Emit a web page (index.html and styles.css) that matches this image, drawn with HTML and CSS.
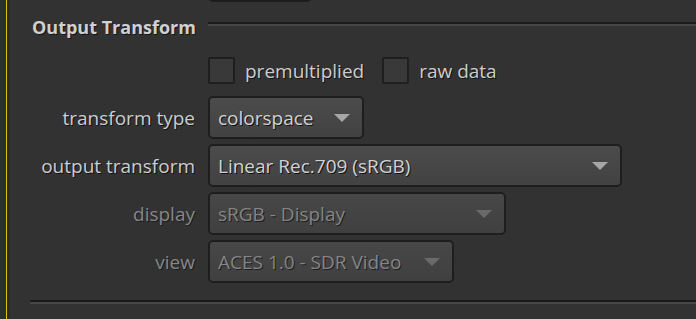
FILE: index.html
```html
<!DOCTYPE html>
<html>
<head>
<meta charset="utf-8">
<link rel="stylesheet" href="styles.css">
</head>
<body>
<div class="panel">
  <div class="rail"></div>
  <div class="rail-line"></div>
  <div class="rail-shadow"></div>
  <div class="content">
    <div class="stub"></div>
    <div class="section-head">
      <span class="section-title">Output Transform</span>
      <span class="section-rule"></span>
    </div>
    <div class="form">
      <span></span>
      <div class="checks">
        <label class="check"><span class="box"></span><span class="check-text">premultiplied</span></label>
        <label class="check"><span class="box"></span><span class="check-text">raw data</span></label>
      </div>
      <span class="label">transform type</span>
      <div class="select w-type"><span class="value">colorspace</span><span class="arrow"></span></div>
      <span class="label">output transform</span>
      <div class="select w-out"><span class="value">Linear Rec.709 (sRGB)</span><span class="arrow"></span></div>
      <span class="label disabled">display</span>
      <div class="select disabled w-display"><span class="value">sRGB - Display</span><span class="arrow"></span></div>
      <span class="label disabled">view</span>
      <div class="select disabled w-view"><span class="value">ACES 1.0 - SDR Video</span><span class="arrow"></span></div>
    </div>
    <div class="bottom-rule"></div>
  </div>
</div>
</body>
</html>
```
FILE: styles.css
```css
html, body {
  margin: 0;
  padding: 0;
  background: #323232;
  overflow: hidden;
}
body {
  font-family: "Open Sans", "Noto Sans", "DejaVu Sans", sans-serif;
  font-size: 19px;
  color: #cdcdcd;
}
.panel {
  display: flex;
  width: 696px;
  height: 319px;
}
.rail {
  width: 6px;
  background: #2f2f2f;
}
.rail-line {
  width: 1px;
  background: #d6c800;
}
.rail-shadow {
  width: 3px;
  background: #2a2a2a;
}
.content {
  flex: 1;
  min-width: 0;
}
.stub {
  margin-left: 198px;
  margin-top: -38px;
  width: 100px;
  height: 36px;
  border: 2px solid #1d1d1d;
  border-radius: 5px;
  background: #444444;
}
.section-head {
  display: flex;
  align-items: flex-start;
  height: 45px;
}
.section-title {
  width: 198px;
  padding-left: 22px;
  box-sizing: border-box;
  font-weight: bold;
  font-size: 18px;
  line-height: 26px;
  margin-top: 12px;
  color: #d0d0d0;
  text-shadow: 1px 1px 0 #151515;
  white-space: nowrap;
}
.section-rule {
  flex: 1;
  height: 2px;
  background: #1a1a1a;
  border-bottom: 2px solid #474747;
  margin-top: 20px;
}
.form {
  display: grid;
  grid-template-columns: 185px auto;
  column-gap: 13px;
  row-gap: 5px;
  margin-top: 10px;
  align-items: center;
}
.checks {
  display: flex;
  gap: 18px;
  height: 27px;
  margin-bottom: 7px;
}
.check {
  display: flex;
  align-items: center;
  gap: 10px;
}
.box {
  width: 23px;
  height: 23px;
  border: 2px solid #1f1f1f;
  border-radius: 2px;
  background: #393939;
}
.check-text, .label, .value {
  text-shadow: 1px 1px 0 #121212;
  white-space: nowrap;
}
.label {
  text-align: right;
  color: #cdcdcd;
}
.label.disabled {
  color: #878787;
  text-shadow: 1px 1px 0 #1c1c1c;
}
.select {
  display: flex;
  align-items: center;
  justify-content: space-between;
  height: 39px;
  border: 2px solid #1e1e1e;
  border-radius: 5px;
  background: linear-gradient(#4b4b4b, #424242);
  padding: 0 12px 0 8px;
  box-sizing: content-box;
}
.value {
  color: #d2d2d2;
}
.arrow {
  width: 0;
  height: 0;
  border-left: 8px solid transparent;
  border-right: 8px solid transparent;
  border-top: 8px solid #a6a6a6;
}
.select.disabled {
  background: linear-gradient(#474747, #404040);
}
.select.disabled .value {
  color: #858585;
  text-shadow: 1px 1px 0 #1e1e1e;
}
.select.disabled .arrow {
  border-top-color: #6a6a6a;
}
.w-type { width: 132px; }
.w-out { width: 390px; }
.w-display { width: 274px; }
.w-view { width: 222px; }
.bottom-rule {
  margin-left: 20px;
  margin-top: 17px;
  height: 2px;
  background: #1a1a1a;
  border-bottom: 2px solid #474747;
}
```
